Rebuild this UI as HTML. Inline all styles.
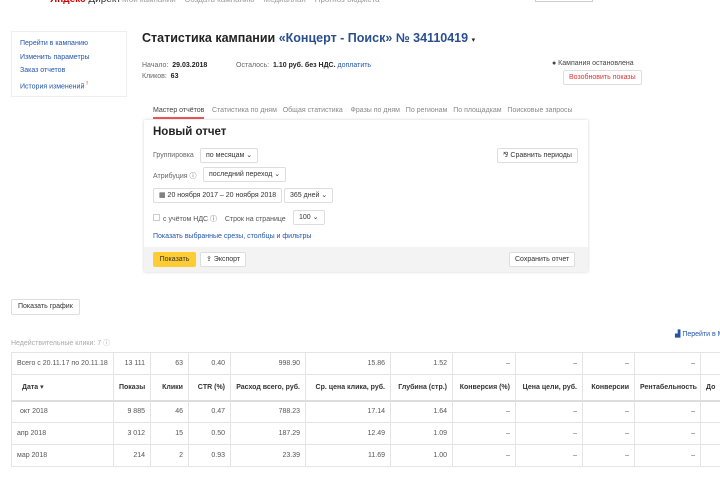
<!DOCTYPE html>
<html><head><meta charset="utf-8"><style>
*{margin:0;padding:0;box-sizing:border-box}
body{width:720px;height:480px;overflow:hidden;background:#fff;font-family:"Liberation Sans","DejaVu Sans",sans-serif;color:#333;position:relative;font-size:7px}
.a{position:absolute;white-space:nowrap}
.lk{color:#2255aa}
.btn{position:absolute;border:1px solid #ddd;border-radius:2px;background:#fff;font-size:7px;line-height:13px;padding:0 5px;white-space:nowrap}
table{position:absolute;left:11px;top:352px;border-collapse:collapse;font-size:7px;color:#555;table-layout:fixed;width:719px}
td{border:1px solid #e4e4e4;height:22px;text-align:right;padding:0 5px;white-space:nowrap;overflow:hidden}
tr.h td{font-weight:bold;color:#333;height:26px;border-bottom:2px solid #ddd}
</style></head><body>
<div class="a" style="left:0;top:-6px;width:720px;height:12px;font-size:8px;color:#999">
<span class="a" style="left:50px;top:0;color:#c00;font-weight:bold;font-size:10px">Яндекс <span style="color:#333;font-weight:normal">Директ</span></span>
<span class="a" style="left:122px;top:1px">Мои кампании &nbsp;&nbsp; Создать кампанию &nbsp;&nbsp; Медиаплан &nbsp;&nbsp; Прогноз бюджета</span>
<span class="a" style="left:535px;top:-2px;border:1px solid #ccc;width:58px;height:10px"></span>
</div>
<div class="a" style="left:11px;top:31px;width:116px;height:66px;border:1px solid #eee;font-size:7px;line-height:13.5px;padding:5px 8px" >
<div class="lk">Перейти в кампанию</div><div class="lk">Изменить параметры</div><div class="lk">Заказ отчетов</div><div class="lk">История изменений <sup style="color:#c00;font-size:5px">!</sup></div></div>
<div class="a" style="left:142px;top:31px;font-size:12.5px;font-weight:bold;color:#222">Статистика кампании <span style="color:#2a4f8f">«Концерт - Поиск» № 34110419</span> <span style="font-size:7px">▾</span></div>
<div class="a" style="left:142px;top:62px;color:#666">Начало: &nbsp;<b style="color:#222">29.03.2018</b></div>
<div class="a" style="left:142px;top:73px;color:#666">Кликов: &nbsp;<b style="color:#222">63</b></div>
<div class="a" style="left:236px;top:62px;color:#666">Осталось: &nbsp;<b style="color:#222">1.10 руб. без НДС.</b> <span class="lk">доплатить</span></div>
<div class="a" style="left:552px;top:60px;color:#444">● Кампания остановлена</div>
<div class="btn" style="left:563px;top:70px;color:#d33;height:15px">Возобновить показы</div>
<div class="a" style="left:153px;top:107px;color:#444">Мастер отчётов</div>
<div class="a" style="left:153px;top:117px;width:51px;height:2px;background:#e55"></div>
<div class="a" style="left:212px;top:107px;color:#888">Статистика по дням &nbsp; Общая статистика &nbsp;&nbsp; Фразы по дням &nbsp; По регионам &nbsp; По площадкам &nbsp; Поисковые запросы</div>
<div class="a" style="left:144px;top:120px;width:444px;height:152px;box-shadow:0 0 3px rgba(0,0,0,.18);background:#fff"></div>
<div class="a" style="left:144px;top:247px;width:444px;height:25px;background:#f3f3f3"></div>
<div class="a" style="left:153px;top:126px;font-size:11.5px;font-weight:bold;color:#222">Новый отчет</div>
<div class="a" style="left:153px;top:152px;color:#666">Группировка</div>
<div class="btn" style="left:200px;top:148px;height:15px">по месяцам ⌄</div>
<div class="btn" style="left:497px;top:148px;height:15px">⅋ Сравнить периоды</div>
<div class="a" style="left:153px;top:171px;color:#666">Атрибуция ⓘ</div>
<div class="btn" style="left:203px;top:167px;height:15px">последний переход ⌄</div>
<div class="btn" style="left:153px;top:188px;height:15px">▦ 20 ноября 2017 – 20 ноября 2018</div>
<div class="btn" style="left:284px;top:188px;height:15px">365 дней ⌄</div>
<div class="a" style="left:153px;top:214px;width:7px;height:7px;border:1px solid #ccc"></div>
<div class="a" style="left:163px;top:214px;color:#555">с учётом НДС ⓘ &nbsp;&nbsp; Строк на странице</div>
<div class="btn" style="left:293px;top:210px;height:15px">100 ⌄</div>
<div class="a lk" style="left:153px;top:233px">Показать выбранные срезы, столбцы и фильтры</div>
<div class="a" style="left:153px;top:252px;width:43px;height:15px;background:#fc3;border-radius:2px;text-align:center;line-height:15px">Показать</div>
<div class="btn" style="left:200px;top:252px;height:15px">⇪ Экспорт</div>
<div class="btn" style="left:509px;top:252px;height:15px">Сохранить отчет</div>
<div class="btn" style="left:11px;top:299px;height:16px;line-height:14px;padding:0 6px">Показать график</div>
<div class="a" style="left:11px;top:338px;color:#aaa">Недействительные клики: 7 ⓘ</div>
<div class="a lk" style="left:675px;top:330px">▟ Перейти в М</div>
<table>
<colgroup><col style="width:102px"><col style="width:37px"><col style="width:38px"><col style="width:42px"><col style="width:75px"><col style="width:85px"><col style="width:62px"><col style="width:63px"><col style="width:67px"><col style="width:52px"><col style="width:66px"><col style="width:30px"></colgroup>
<tr><td style="text-align:left">Всего с 20.11.17 по 20.11.18</td><td>13 111</td><td>63</td><td>0.40</td><td>998.90</td><td>15.86</td><td>1.52</td><td>–</td><td>–</td><td>–</td><td>–</td><td>–</td></tr>
<tr class="h"><td style="text-align:left;padding-left:10px">Дата ▾</td><td>Показы</td><td>Клики</td><td>CTR (%)</td><td>Расход всего, руб.</td><td>Ср. цена клика, руб.</td><td>Глубина (стр.)</td><td>Конверсия (%)</td><td>Цена цели, руб.</td><td>Конверсии</td><td>Рентабельность</td><td style="text-align:left">До</td></tr>
<tr><td style="text-align:left;padding-left:8px">окт 2018</td><td>9 885</td><td>46</td><td>0.47</td><td>788.23</td><td>17.14</td><td>1.64</td><td>–</td><td>–</td><td>–</td><td>–</td><td></td></tr>
<tr><td style="text-align:left">апр 2018</td><td>3 012</td><td>15</td><td>0.50</td><td>187.29</td><td>12.49</td><td>1.09</td><td>–</td><td>–</td><td>–</td><td>–</td><td></td></tr>
<tr><td style="text-align:left">мар 2018</td><td>214</td><td>2</td><td>0.93</td><td>23.39</td><td>11.69</td><td>1.00</td><td>–</td><td>–</td><td>–</td><td>–</td><td></td></tr>
</table>
</body></html>
